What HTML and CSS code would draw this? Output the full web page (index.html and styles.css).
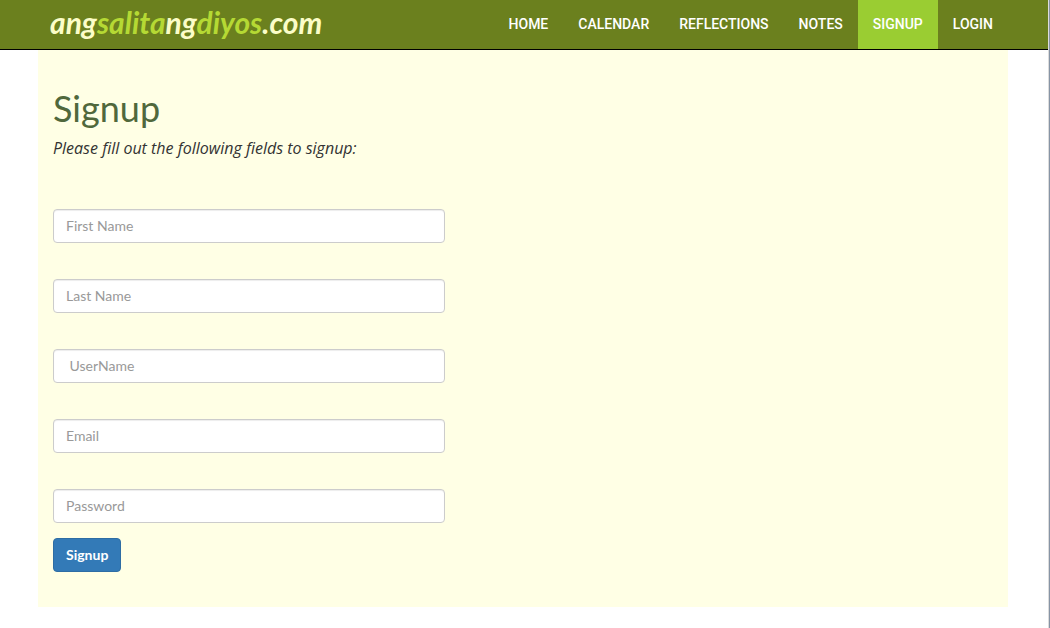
FILE: index.html
```
<!DOCTYPE html>
<html lang="en">
<head>
<meta charset="utf-8">
<meta name="viewport" content="width=device-width, initial-scale=1">
<title>Signup</title>
<link rel="stylesheet" href="styles.css">
</head>
<body>
<header class="navbar">
  <div class="container navbar-inner">
    <a class="brand" href="#">ang<span class="brand-accent">salita</span>ng<span class="brand-accent">diyos</span>.com</a>
    <nav class="menu">
      <a href="#">HOME</a>
      <a href="#">CALENDAR</a>
      <a href="#">REFLECTIONS</a>
      <a href="#">NOTES</a>
      <a class="active" href="#" aria-current="page">SIGNUP</a>
      <a href="#">LOGIN</a>
    </nav>
  </div>
</header>
<main class="container content">
  <h1>Signup</h1>
  <p class="intro">Please fill out the following fields to signup:</p>
  <form class="form">
    <input class="field" type="text" placeholder="First Name" aria-label="First Name">
    <input class="field" type="text" placeholder="Last Name" aria-label="Last Name">
    <input class="field" type="text" placeholder="&nbsp;UserName" aria-label="UserName">
    <input class="field" type="email" placeholder="Email" aria-label="Email">
    <input class="field" type="password" placeholder="Password" aria-label="Password">
    <button class="submit" type="submit">Signup</button>
  </form>
</main>
</body>
</html>
```
FILE: styles.css
```
* {
  box-sizing: border-box;
}

html {
  min-height: 100%;
  background: #fff;
  border-right: 1px solid #8794a5;
}

body {
  margin: 0;
  border-right: 1px solid #dcdcdc;
  min-height: 100vh;
  font-family: Lato, "Noto Sans", sans-serif;
  font-size: 14px;
  line-height: 20px;
  color: #333;
}

.container {
  margin: 0 40px 0 38px;
}

.navbar {
  display: flow-root;
  background: #6b801e;
  border-bottom: 1px solid #000;
}

.navbar-inner {
  display: flex;
  justify-content: space-between;
  min-height: 49px;
}

.brand {
  padding: 2px 12px 7px;
  font-size: 30px;
  line-height: 40px;
  font-weight: 700;
  font-style: italic;
  color: #fbfdc8;
  text-decoration: none;
}

.brand-accent {
  color: #b5d934;
}

.menu {
  display: flex;
}

.menu a {
  padding: 14px 15px 15px;
  font-family: Roboto, Lato, sans-serif;
  font-size: 14px;
  font-weight: 500;
  color: #fff;
  text-decoration: none;
}

.menu .active {
  background: #9acd32;
}

.content {
  padding: 38px 15px 35px;
  background: #ffffe5;
}

h1 {
  margin: 0 0 10px;
  font-size: 36px;
  line-height: 40px;
  font-weight: 400;
  color: #50683c;
}

.intro {
  margin: 0 0 51px;
  font-family: "Open Sans", "Noto Sans", sans-serif;
  font-size: 16px;
  font-style: italic;
}

.form {
  width: 42%;
  max-width: 392px;
  min-width: 240px;
}

.field {
  display: block;
  width: 100%;
  height: 34px;
  margin: 0 0 36px;
  padding: 5px 12px 7px;
  border: 1px solid #ccc;
  border-radius: 4px;
  background: #fff;
  box-shadow: inset 0 1px 1px rgba(0, 0, 0, 0.075);
  font: inherit;
  color: #555;
}

.field::placeholder {
  color: #999;
  opacity: 1;
}

.field:last-of-type {
  margin-bottom: 15px;
}

.submit {
  height: 34px;
  padding: 6px 12px;
  border: 1px solid #2e6da4;
  border-radius: 4px;
  background: #337ab7;
  font: inherit;
  font-weight: 700;
  color: #fff;
}
```
